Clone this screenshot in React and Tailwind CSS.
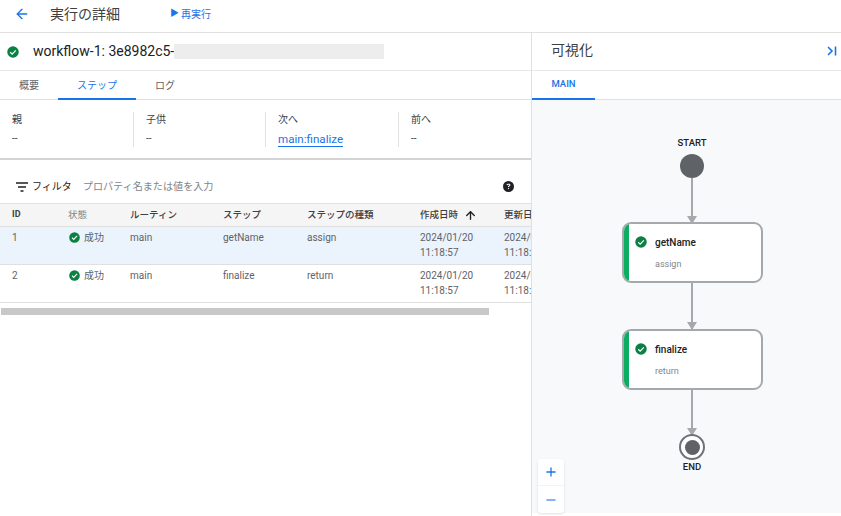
import React from 'react';
import { ArrowLeft, ArrowUp, Plus, Minus } from 'lucide-react';
import { FaCircleQuestion } from 'react-icons/fa6';

const fontStack = "font-['Roboto','Noto_Sans_CJK_JP',sans-serif]";

// green status icon used in the title, the table and the graph nodes
function CheckIcon({ size = 14 }) {
    return (
        <svg width={size} height={size} viewBox="0 0 24 24" className="shrink-0">
            <circle cx="12" cy="12" r="11.5" fill="#0b8043" />
            <path d="M6.5 12.5l3.8 3.8 7.4-7.6" fill="none" stroke="#fff" strokeWidth="2.4" />
        </svg>
    );
}

const infoItems = [
    { label: '親', value: '--' },
    { label: '子供', value: '--' },
    { label: '次へ', value: 'main:finalize', link: true },
    { label: '前へ', value: '--' },
];

const rows = [
    { id: 1, routine: 'main', step: 'getName', type: 'assign', selected: true },
    { id: 2, routine: 'main', step: 'finalize', type: 'return', selected: false },
];

const tableGrid = 'grid grid-cols-[56px_62px_93px_84px_113px_84px_60px] pl-3';

function GraphNode({ top, name, type }) {
    return (
        <div
            className="absolute left-[90px] w-[141px] h-[61px] flex bg-white rounded-[9px] border-2 border-[#a5a9ad] overflow-hidden"
            style={{ top }}
        >
            <div className="w-[5px] bg-[#0cad60]" />
            <div className="pl-[6px] pt-[9px]">
                <div className="flex items-center gap-[8px] h-[18px]">
                    <CheckIcon size={12} />
                    <span className="text-[10px] font-medium text-[#202124]">{name}</span>
                </div>
                <div className="pl-[20px] pt-[8px] text-[9px] leading-[11px] text-[#80868b]">{type}</div>
            </div>
        </div>
    );
}

function Edge({ top, height }) {
    return (
        <div className="absolute left-[159px] w-[2px] bg-[#a5a9ad]" style={{ top, height }}>
            <div className="absolute -left-[4px] bottom-0 w-0 h-0 border-x-[5px] border-x-transparent border-t-[8px] border-t-[#a5a9ad]" />
        </div>
    );
}

export default function App() {
    return (
        <div className={`${fontStack} w-[841px] h-[516px] overflow-hidden bg-white flex flex-col text-[#3c4043]`}>
            <header className="h-[33px] shrink-0 flex items-center border-b border-[#e0e0e0]">
                <ArrowLeft size={16} strokeWidth={2} className="ml-[14px] mb-[5px] text-[#1a73e8]" />
                <h1 className="ml-5 mb-[4px] text-[14px] text-[#3c4043]">実行の詳細</h1>
                <button className="ml-[50px] mb-[4px] flex items-center text-[10px] text-[#1a73e8]">
                    <span className="text-[9px] mr-[2px]">▶</span>再実行
                </button>
            </header>

            <div className="flex flex-1 min-h-0">
                <main className="w-[532px] shrink-0 border-r border-[#e0e0e0] relative">
                    <div className="h-[38px] flex items-center border-b border-[#e8e8e8] pl-[7px]">
                        <CheckIcon size={12} />
                        <span className="ml-[14px] text-[14px] text-[#202124]">workflow-1: 3e8982c5-</span>
                        <span className="w-[210px] h-[15px] bg-[#ededed]" />
                    </div>

                    <nav className="h-[29px] flex border-b border-[#e0e0e0] text-[10px] text-[#5f6368]">
                        <div className="w-[58px] pl-[19px] pt-[7px]">概要</div>
                        <div className="w-[78px] pt-[7px] text-center text-[#1a73e8] border-b-2 border-[#1a73e8] h-[29px]">ステップ</div>
                        <div className="pl-[19px] pt-[7px]">ログ</div>
                    </nav>

                    <section className="h-[60px] grid grid-cols-[133px_132px_133px_133px] pt-3 border-b-2 border-[#d4d4d4]">
                        {infoItems.map((item, i) => (
                            <div key={item.label} className={`h-[35px] pl-3 pt-px text-[10px] ${i > 0 ? 'border-l border-[#e0e0e0]' : ''}`}>
                                <div className="leading-[14px] text-[#3c4043]">{item.label}</div>
                                {item.link ? (
                                    <a className="inline-block mt-[5px] leading-[14px] text-[11.6px] text-[#1a73e8] border-b border-[#1a73e8]">{item.value}</a>
                                ) : (
                                    <div className="mt-[5px] leading-[14px] text-[#3c4043]">{item.value}</div>
                                )}
                            </div>
                        ))}
                    </section>

                    <div className="h-[43px] flex items-center pl-4 pt-[10px] text-[10px]">
                        <svg width="12" height="10" viewBox="0 0 12 10" className="shrink-0">
                            <path d="M0 1h12M2 5h8M4.5 9h3" stroke="#202124" strokeWidth="1.4" />
                        </svg>
                        <span className="ml-1 text-[#202124]">フィルタ</span>
                        <span className="ml-[11px] text-[10.1px] text-[#80868b]">プロパティ名または値を入力</span>
                        <FaCircleQuestion size={11} className="ml-auto mr-[17px] text-[#202124]" />
                    </div>

                    <div className={`${tableGrid} h-[24px] items-center bg-[#f5f5f5] border-y border-[#e0e0e0] text-[9.5px] font-medium text-[#3c4043] overflow-hidden`}>
                        <span className="font-bold text-[9px]">ID</span>
                        <span className="text-[#80868b] font-normal">状態</span>
                        <span>ルーティン</span>
                        <span>ステップ</span>
                        <span>ステップの種類</span>
                        <span className="flex items-center gap-[6px] whitespace-nowrap">作成日時 <ArrowUp size={13} strokeWidth={2.5} className="text-[#202124]" /></span>
                        <span className="whitespace-nowrap">更新日時</span>
                    </div>
                    {rows.map((row) => (
                        <div
                            key={row.id}
                            className={`${tableGrid} h-[38px] pt-[3px] border-b border-[#e0e0e0] text-[10px] leading-[15px] text-[#5f6368] overflow-hidden ${row.selected ? 'bg-[#ebf3fc]' : ''}`}
                        >
                            <span>{row.id}</span>
                            <span className="flex items-start gap-[4px] pl-px"><span className="mt-[2px]"><CheckIcon size={11} /></span>成功</span>
                            <span>{row.routine}</span>
                            <span>{row.step}</span>
                            <span>{row.type}</span>
                            <span>2024/01/20<br />11:18:57</span>
                            <span className="whitespace-nowrap">2024/01/20<br />11:18:57</span>
                        </div>
                    ))}
                    <div className="mt-[5px] ml-px w-[488px] h-[7px] bg-[#c8c8c8]" />
                    {/* panel resize handle */}
                    <div className="absolute -right-[4px] top-[237px] w-[2px] h-[18px] bg-[#80868b]" />
                </main>

                <aside className="flex-1 min-w-0 flex flex-col">
                    <div className="h-[38px] shrink-0 flex items-center justify-between border-b border-[#e8e8e8] pl-[19px] pr-[4px] pb-[2px]">
                        <span className="text-[14px] text-[#3c4043]">可視化</span>
                        <svg width="10" height="10" viewBox="0 0 10 10">
                            <path d="M1 1l4 4-4 4M8.5 0.5v9" fill="none" stroke="#1a73e8" strokeWidth="1.6" />
                        </svg>
                    </div>
                    <div className="h-[29px] shrink-0 border-b border-[#e0e0e0]">
                        <div className="w-[63px] h-[29px] pt-[6px] text-center text-[9.5px] font-medium text-[#1a73e8] border-b-2 border-[#1a73e8]">MAIN</div>
                    </div>

                    {/* graph canvas */}
                    <div className="relative h-[413px] bg-[#f8f9fa]">
                        <div className="absolute left-[130px] top-[37px] w-[60px] text-center text-[9.5px] leading-[12px] font-medium text-[#202124]">START</div>
                        <div className="absolute left-[148px] top-[54px] w-6 h-6 rounded-full bg-[#5f6368]" />
                        <Edge top={78} height={46} />
                        <GraphNode top={122} name="getName" type="assign" />
                        <Edge top={183} height={47} />
                        <GraphNode top={229} name="finalize" type="return" />
                        <Edge top={290} height={46} />
                        <div className="absolute left-[147px] top-[334px] w-[26px] h-[26px] rounded-full border-2 border-[#6f7378] flex items-center justify-center bg-white">
                            <div className="w-[15px] h-[15px] rounded-full bg-[#5f6368]" />
                        </div>
                        <div className="absolute left-[130px] top-[361px] w-[60px] text-center text-[9.5px] leading-[12px] font-medium text-[#202124]">END</div>

                        <div className="absolute left-[6px] top-[359px] w-[26px] h-[54px] bg-white rounded-[3px] shadow-sm flex flex-col items-center">
                            <button className="h-[27px] flex items-center justify-center border-b border-[#f1f3f4] w-full text-[#1a73e8]"><Plus size={14} strokeWidth={2.2} /></button>
                            <button className="h-[27px] flex items-center justify-center w-full text-[#5c9cee]"><Minus size={14} strokeWidth={2.2} /></button>
                        </div>
                    </div>
                </aside>
            </div>
        </div>
    );
}
